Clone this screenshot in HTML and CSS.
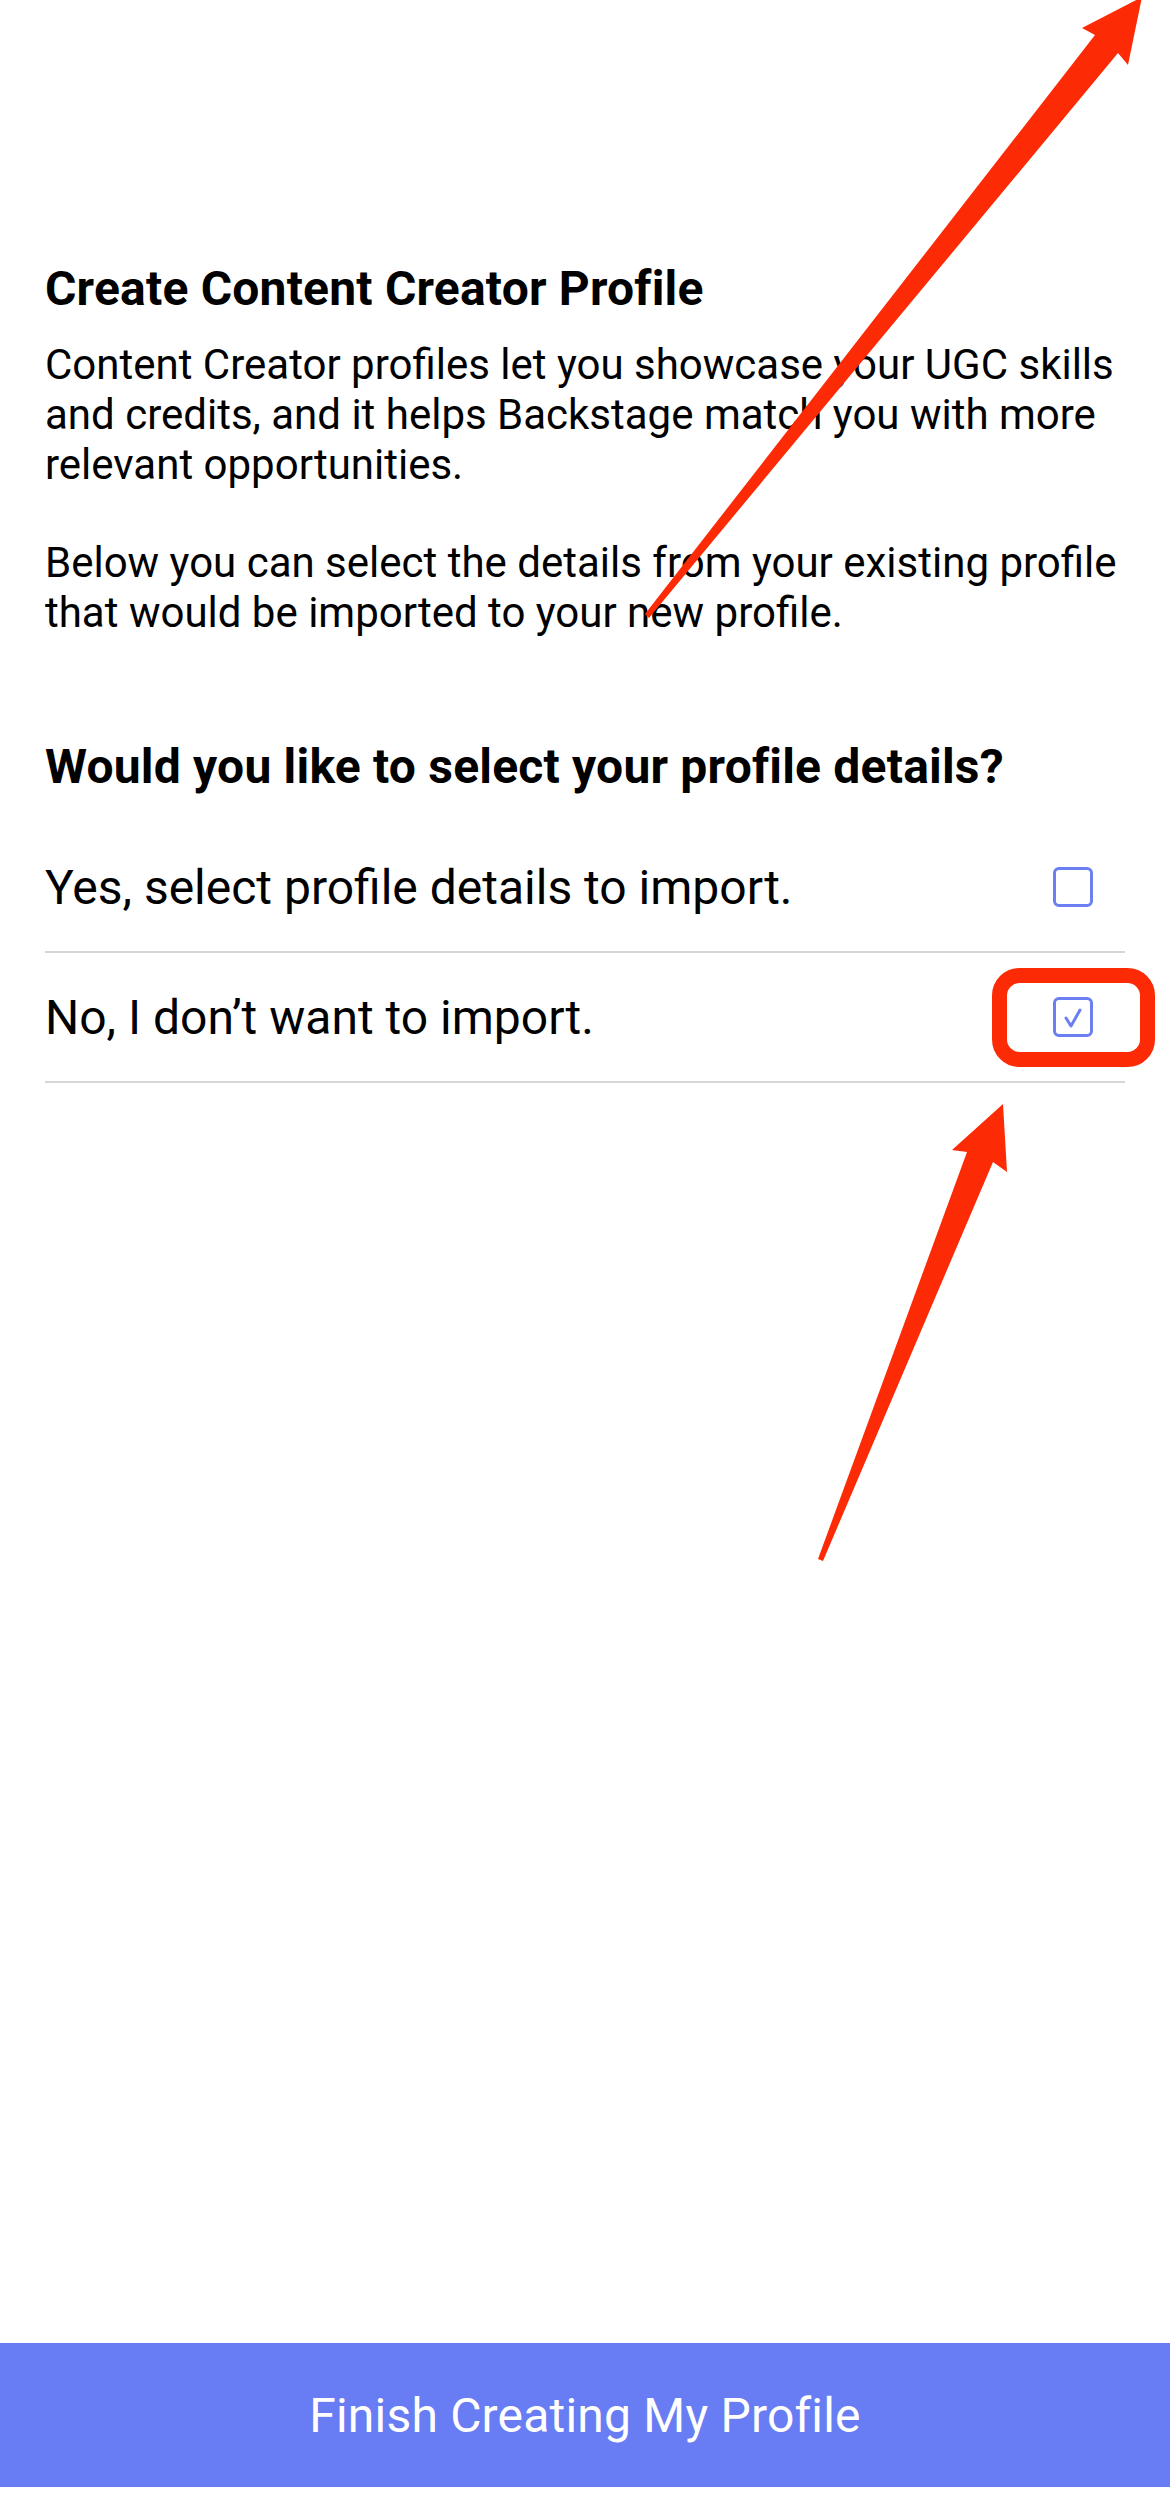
FILE: index.html
```html
<!DOCTYPE html>
<html lang="en">
<head>
    <meta charset="UTF-8">
    <meta name="viewport" content="width=device-width, initial-scale=1.0">
    <title>Create Content Creator Profile</title>
    <link rel="stylesheet" href="styles.css">
</head>
<body>

    <div class="page">
        <div class="content">
            <h1 class="title">Create Content Creator Profile</h1>
            <p class="text">Content Creator profiles let you showcase your UGC skills and credits, and it helps Backstage match you with more relevant opportunities.</p>
            <p class="text second">Below you can select the details from your existing profile that would be imported to your new profile.</p>

            <h2 class="question">Would you like to select your profile details?</h2>

            <div class="options">
                <div class="option">
                    <span>Yes, select profile details to import.</span>
                    <span class="checkbox"></span>
                </div>
                <div class="option">
                    <span>No, I don’t want to import.</span>
                    <span class="checkbox">
                        <svg width="34" height="34" viewBox="0 0 34 34">
                            <path d="M10 18 L15 26 L24 10" fill="none" stroke="#6b7ff2" stroke-width="3" stroke-linecap="round" stroke-linejoin="round"/>
                        </svg>
                    </span>
                </div>
            </div>
        </div>

        <button class="finish">Finish Creating My Profile</button>

        <!-- red markup drawn over the screenshot -->
        <svg class="marks" width="1170" height="2520" viewBox="0 0 1170 2520">
            <polygon points="645,614 1095,35 1082,28 1142,-3 1128,65 1118,53 649,618" fill="#fd2b05"/>
            <polygon points="818,1559 967,1152 952,1150 1003,1104 1007,1172 993,1162 823,1561" fill="#fd2b05"/>
            <rect x="999.5" y="975.5" width="148" height="84" rx="20" fill="none" stroke="#fd2b05" stroke-width="15"/>
        </svg>
    </div>

</body>
</html>
```

FILE: styles.css
```css
* {
    box-sizing: border-box;
    margin: 0;
    padding: 0;
}

body {
    font-family: Roboto, "Liberation Sans", Arial, sans-serif;
    background-color: white;
    color: #000;
}

.page {
    position: relative;
    width: 1170px;
    min-height: 2520px;
    display: flex;
    flex-direction: column;
    padding-bottom: 33px;
}

.content {
    padding: 261px 45px 0;
}

.title {
    font-size: 48px;
    font-weight: 700;
    line-height: 56px;
    letter-spacing: 0.2px;
}

.text {
    margin-top: 23px;
    font-size: 42px;
    line-height: 50px;
}

.text.second {
    margin-top: 48px;
}

.question {
    margin-top: 101px;
    font-size: 48px;
    font-weight: 700;
    line-height: 56px;
    letter-spacing: 0.2px;
}

.options {
    margin-top: 28px;
}

.option {
    display: flex;
    align-items: center;
    justify-content: space-between;
    height: 130px;
    padding-right: 32px;
    border-bottom: 2px solid #d6d6d6;
    font-size: 48px;
}

.checkbox {
    display: flex;
    align-items: center;
    justify-content: center;
    width: 40px;
    height: 40px;
    border: 3px solid #6b7ff2;
    border-radius: 6px;
}

.finish {
    margin-top: auto;
    height: 144px;
    width: 100%;
    border: none;
    background-color: #687cf3;
    color: white;
    font-family: Roboto, "Liberation Sans", Arial, sans-serif;
    font-size: 48px;
    letter-spacing: 0.2px;
}

.marks {
    position: absolute;
    top: 0;
    left: 0;
    pointer-events: none;
}
```
